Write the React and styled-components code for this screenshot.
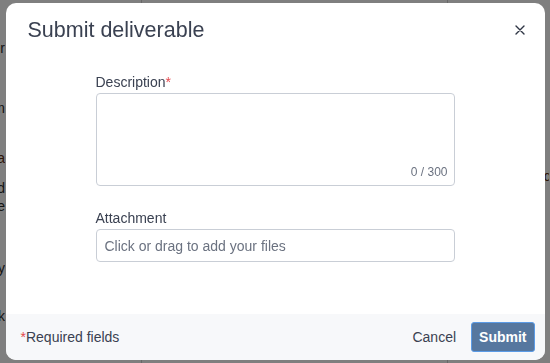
import React from "react";
import styled, { createGlobalStyle } from "styled-components";

const Global = createGlobalStyle`
  html, body { margin: 0; padding: 0; width: 550px; height: 363px; overflow: hidden; }
  body { font-family: "Liberation Sans", Arial, sans-serif; background: #7f7f7f; }
  * { box-sizing: border-box; }
`;

const Page = styled.div`
  position: relative;
  width: 550px;
  height: 363px;
  background: #ffffff;
  display: grid;
  grid-template-columns: 6px 136px 306px 84px 18px;
  overflow: hidden;
`;

const PageCol = styled.div`
  border-right: 1px solid ${(p) => (p.$line ? "#d0d0d0" : "transparent")};
  display: flex;
  flex-direction: column;
  padding-top: ${(p) => p.$top || 0}px;
  overflow: hidden;
`;

const FragRow = styled.div`
  display: flex;
  justify-content: ${(p) => (p.$start ? "flex-start" : "flex-end")};
  margin-top: ${(p) => p.$mt || 0}px;
  height: 16px;
`;

const Frag = styled.span`
  flex: none;
  font-size: 14px;
  line-height: 16px;
  color: ${(p) => p.$color || "#2b2b2b"};
  white-space: nowrap;
`;

const Overlay = styled.div`
  position: fixed;
  inset: 0;
  background: rgba(0, 0, 0, 0.5);
  display: flex;
  align-items: center;
  justify-content: center;
`;

const Modal = styled.div`
  width: 539px;
  height: 357px;
  background: #ffffff;
  border-radius: 10px;
  display: flex;
  flex-direction: column;
  overflow: hidden;
`;

const Header = styled.div`
  display: flex;
  align-items: center;
  justify-content: space-between;
  padding: 14px 18px 0 22px;
  height: 40px;
`;

const Title = styled.h2`
  margin: 0;
  font-weight: 400;
  font-size: 21.5px;
  line-height: 25px;
  color: #3a4151;
`;

const CloseButton = styled.button`
  border: 0;
  background: none;
  padding: 0;
  width: 14px;
  height: 14px;
  display: flex;
  align-items: center;
  justify-content: center;
  cursor: pointer;
`;

const Body = styled.div`
  flex: 1;
  padding: 29px 90px 0;
  display: flex;
  flex-direction: column;
`;

const Field = styled.div`
  display: flex;
  flex-direction: column;
  margin-bottom: ${(p) => p.$mb || 0}px;
`;

const Label = styled.label`
  font-size: 14px;
  line-height: 20px;
  color: #3a4151;
  margin-bottom: 1px;
`;

const Star = styled.span`
  color: #e5484d;
`;

const TextAreaBox = styled.div`
  height: 93px;
  border: 1px solid #c9ced6;
  border-radius: 4px;
  display: flex;
  flex-direction: column;
  justify-content: flex-end;
  align-items: flex-end;
  padding: 0 6px 6px 8px;
`;

const TextArea = styled.textarea`
  flex: 1;
  width: 100%;
  border: 0;
  resize: none;
  outline: none;
  font-family: inherit;
  font-size: 14px;
  padding: 6px 0 0;
  background: transparent;
`;

const Counter = styled.span`
  font-size: 12px;
  line-height: 14px;
  color: #6b7280;
`;

const Input = styled.input`
  height: 33px;
  border: 1px solid #c9ced6;
  border-radius: 4px;
  padding: 0 8px;
  font-family: inherit;
  font-size: 14px;
  color: #3a4151;
  outline: none;
  &::placeholder { color: #6b7280; }
`;

const Footer = styled.div`
  height: 46px;
  background: #f7f8fa;
  display: flex;
  align-items: center;
  justify-content: space-between;
  padding: 0 10px 0 15px;
`;

const Note = styled.span`
  font-size: 14px;
  color: #3a4151;
`;

const Actions = styled.div`
  display: flex;
  align-items: center;
  gap: 15px;
`;

const TextButton = styled.button`
  border: 0;
  background: none;
  font-family: inherit;
  font-size: 14px;
  color: #3a4151;
  padding: 0;
  cursor: pointer;
`;

const PrimaryButton = styled.button`
  height: 30px;
  padding: 0 7px;
  border-radius: 3px;
  border: 1px solid #5b9be6;
  background: #56779f;
  color: #ffffff;
  font-family: inherit;
  font-weight: 700;
  font-size: 14px;
  cursor: pointer;
`;

export default function App() {
  return (
    <>
      <Global />
      <Page>
        <PageCol $top={40}>
          <FragRow><Frag>Order</Frag></FragRow>
          <FragRow $mt={44}><Frag>Item</Frag></FragRow>
          <FragRow $mt={34}><Frag $color="#5a2c10">Data</Frag></FragRow>
          <FragRow $mt={14}><Frag>Field</Frag></FragRow>
          <FragRow $mt={2}><Frag>Value</Frag></FragRow>
          <FragRow $mt={46}><Frag>Any</Frag></FragRow>
          <FragRow $mt={32}><Frag>Link</Frag></FragRow>
        </PageCol>
        <PageCol $line />
        <PageCol $line />
        <PageCol />
        <PageCol $top={168}>
          <FragRow $start><Frag $color="#5a2c10">&nbsp;nd</Frag></FragRow>
        </PageCol>
      </Page>
      <Overlay>
        <Modal role="dialog" aria-label="Submit deliverable">
          <Header>
            <Title>Submit deliverable</Title>
            <CloseButton aria-label="Close">
              <svg width="10" height="10" viewBox="0 0 10 10">
                <path d="M1 1 L9 9 M9 1 L1 9" stroke="#2f3645" strokeWidth="1.4" strokeLinecap="round" />
              </svg>
            </CloseButton>
          </Header>
          <Body>
            <Field $mb={22}>
              <Label>
                Description<Star>*</Star>
              </Label>
              <TextAreaBox>
                <TextArea aria-label="Description" />
                <Counter>0 / 300</Counter>
              </TextAreaBox>
            </Field>
            <Field>
              <Label>Attachment</Label>
              <Input placeholder="Click or drag to add your files" />
            </Field>
          </Body>
          <Footer>
            <Note>
              <Star>*</Star>Required fields
            </Note>
            <Actions>
              <TextButton>Cancel</TextButton>
              <PrimaryButton>Submit</PrimaryButton>
            </Actions>
          </Footer>
        </Modal>
      </Overlay>
    </>
  );
}
